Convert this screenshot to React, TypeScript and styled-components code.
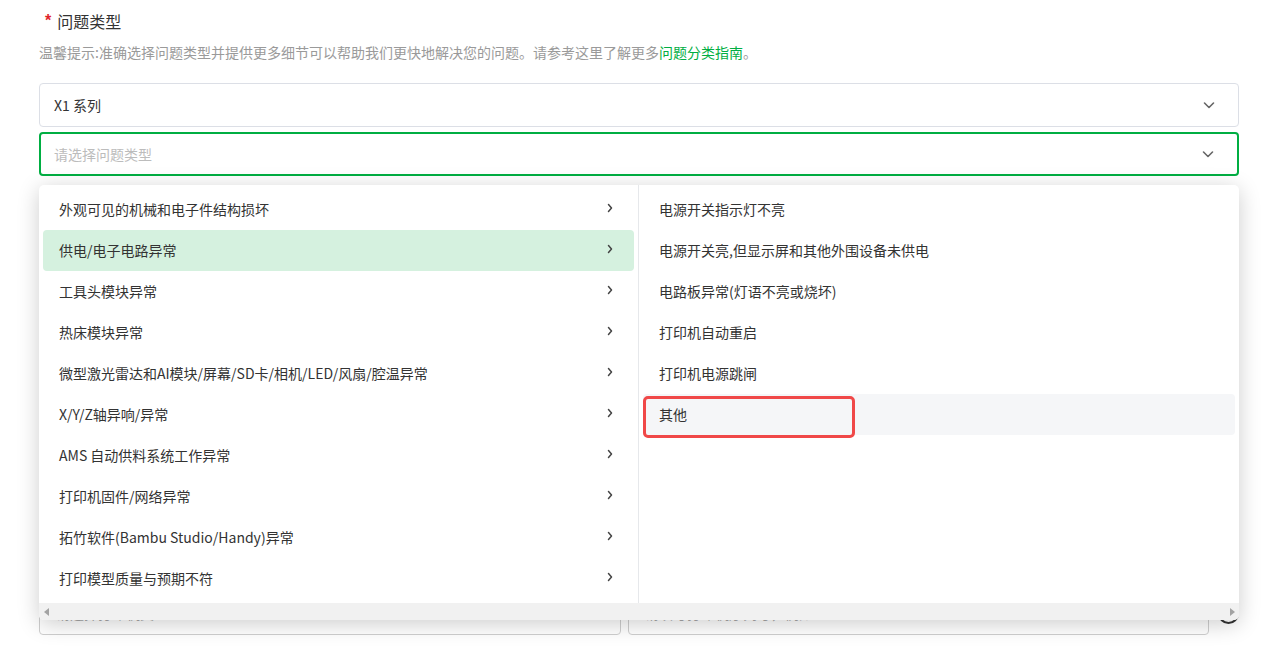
import React from "react";
import styled, { createGlobalStyle } from "styled-components";

// page defaults
const GlobalStyle = createGlobalStyle`
    body {
        margin: 0;
        background: #ffffff;
        font-family: "Noto Sans CJK SC", "Noto Sans", "Liberation Sans", sans-serif;
        color: #333333;
    }
`;

const Page = styled.div`
    width: 1200px;
    padding: 10px 0 0 39px;
    position: relative;
`;

const Label = styled.div`
    display: flex;
    align-items: center;
    height: 22px;
    font-size: 16px;
    color: #333;
    padding-left: 6px;
`;

const Star = styled.span`
    color: #e0242b;
    font-size: 16px;
    margin-right: 6px;
    font-family: "Liberation Sans", sans-serif;
    font-weight: bold;
`;

const Hint = styled.p`
    margin: 9px 0 0;
    font-size: 14px;
    line-height: 22px;
    color: #9a9a9a;
`;

const Link = styled.a`
    color: #00ae42;
    text-decoration: none;
`;

const SelectBox = styled.div<{ $active?: boolean }>`
    box-sizing: border-box;
    height: 44px;
    display: flex;
    align-items: center;
    justify-content: space-between;
    padding: 0 22px 1px ${(p) => (p.$active ? "13px" : "14px")};
    border: ${(p) => (p.$active ? "2px solid #00ae42" : "1px solid #dcdfe6")};
    border-radius: 4px;
    font-size: 14px;
    color: ${(p) => (p.$active ? "#bcbcbc" : "#333")};
    background: #fff;
`;

const Stack = styled.div`
    display: flex;
    flex-direction: column;
    gap: 5px;
    margin-top: 20px;
`;

const Dropdown = styled.div`
    position: absolute;
    left: 39px;
    top: 185px;
    width: 1200px;
    height: 435px;
    background: #fff;
    border-radius: 5px;
    box-shadow: 0 4px 22px rgba(0, 0, 0, 0.2);
    display: flex;
    flex-direction: column;
    overflow: hidden;
    z-index: 10;
`;

const Columns = styled.div`
    flex: 1;
    display: grid;
    grid-template-columns: 600px 1fr;
`;

const Column = styled.ul<{ $divider?: boolean }>`
    list-style: none;
    margin: 0;
    padding: 4px 0;
    border-right: ${(p) => (p.$divider ? "1px solid #e6e8eb" : "none")};
    position: relative;
`;

const Item = styled.li<{ $selected?: boolean; $hover?: boolean }>`
    box-sizing: border-box;
    height: 41px;
    margin: 0 4px;
    padding: 0 20px 2px 16px;
    display: flex;
    align-items: center;
    justify-content: space-between;
    font-size: 14px;
    color: #333;
    border-radius: 4px;
    background: ${(p) => (p.$selected ? "#d5f1df" : p.$hover ? "#f5f6f8" : "transparent")};
`;

const Marker = styled.div`
    position: absolute;
    left: 4px;
    top: 211px;
    width: 212px;
    height: 42px;
    box-sizing: border-box;
    border: 3px solid #f04848;
    border-radius: 5px;
`;

const ScrollBar = styled.div`
    height: 17px;
    background: #f1f1f1;
    display: flex;
    align-items: center;
    justify-content: space-between;
    padding: 0 4px 0 5px;
`;

const Arrow = styled.span<{ $dir: "left" | "right" }>`
    width: 0;
    height: 0;
    border-top: 4px solid transparent;
    border-bottom: 4px solid transparent;
    ${(p) => (p.$dir === "left" ? "border-right: 5px solid #a3a3a3;" : "border-left: 5px solid #a3a3a3;")}
`;

const BottomRow = styled.div`
    margin-top: 415px;
    display: flex;
    align-items: center;
    gap: 7px;
`;

const Input = styled.div<{ $w: number }>`
    box-sizing: border-box;
    width: ${(p) => p.$w}px;
    height: 44px;
    border: 1px solid #cfcfcf;
    border-radius: 4px;
    padding: 0 16px;
    display: flex;
    align-items: center;
    font-size: 14px;
    color: #a8a8a8;
`;

const HelpCircle = styled.div`
    width: 17px;
    height: 17px;
    border: 2px solid #333;
    border-radius: 50%;
    margin-left: 2px;
`;

const ChevronDown = () => (
    <svg width="14" height="14" viewBox="0 0 14 14" fill="none">
        <path d="M2.5 5 L7 9.5 L11.5 5" stroke="#666" strokeWidth="1.6" strokeLinecap="round" strokeLinejoin="round" />
    </svg>
);

const ChevronRight = () => (
    <svg width="8" height="10" viewBox="0 0 8 10" fill="none" style={{ marginTop: -2 }}>
        <path d="M2.5 1.5 L5.5 5 L2.5 8.5" stroke="#444" strokeWidth="1.5" strokeLinecap="round" strokeLinejoin="round" />
    </svg>
);

const categories = [
    "外观可见的机械和电子件结构损坏",
    "供电/电子电路异常",
    "工具头模块异常",
    "热床模块异常",
    "微型激光雷达和AI模块/屏幕/SD卡/相机/LED/风扇/腔温异常",
    "X/Y/Z轴异响/异常",
    "AMS 自动供料系统工作异常",
    "打印机固件/网络异常",
    "拓竹软件(Bambu Studio/Handy)异常",
    "打印模型质量与预期不符",
];

const subItems = [
    "电源开关指示灯不亮",
    "电源开关亮,但显示屏和其他外围设备未供电",
    "电路板异常(灯语不亮或烧坏)",
    "打印机自动重启",
    "打印机电源跳闸",
    "其他",
];

export default function App() {
    return (
        <>
            <GlobalStyle />
            <Page>
                <Label>
                    <Star>*</Star>问题类型
                </Label>
                <Hint>
                    温馨提示:准确选择问题类型并提供更多细节可以帮助我们更快地解决您的问题。请参考这里了解更多
                    <Link href="#">问题分类指南</Link>。
                </Hint>
                <Stack>
                    <SelectBox>
                        X1 系列
                        <ChevronDown />
                    </SelectBox>
                    <SelectBox $active>
                        请选择问题类型
                        <ChevronDown />
                    </SelectBox>
                </Stack>
                <BottomRow>
                    <Input $w={582}>请选择打印机类型</Input>
                    <Input $w={581}>请填写打印机序列号，例如: 01S00C123400001</Input>
                    <HelpCircle />
                </BottomRow>
            </Page>
            <Dropdown>
                <Columns>
                    <Column $divider>
                        {categories.map((c, i) => (
                            <Item key={c} $selected={i === 1}>
                                {c}
                                <ChevronRight />
                            </Item>
                        ))}
                    </Column>
                    <Column>
                        {subItems.map((s, i) => (
                            <Item key={s} $hover={i === 5}>
                                {s}
                            </Item>
                        ))}
                        <Marker />
                    </Column>
                </Columns>
                <ScrollBar>
                    <Arrow $dir="left" />
                    <Arrow $dir="right" />
                </ScrollBar>
            </Dropdown>
        </>
    );
}
